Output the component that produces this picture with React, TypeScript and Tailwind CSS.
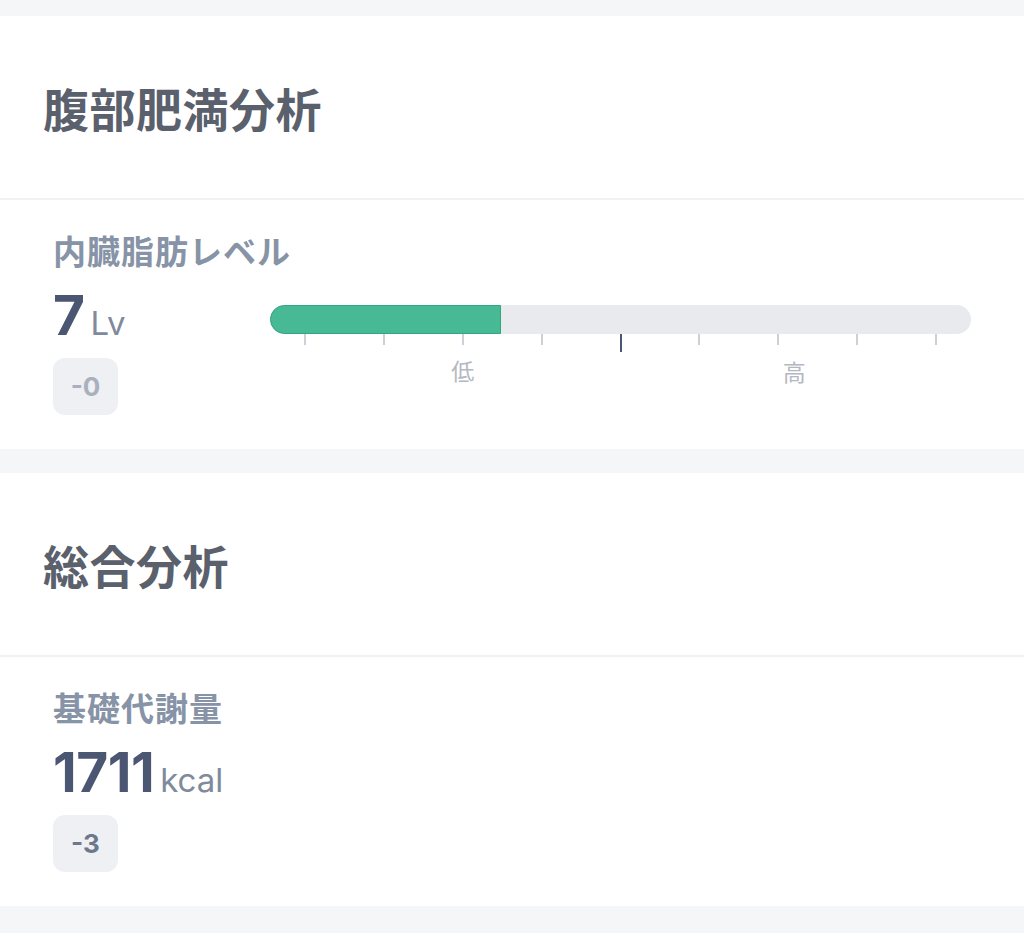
import React from "react";

const jp = "font-['Noto_Sans_CJK_JP',sans-serif]";
const num = "font-['Inter','Noto_Sans_CJK_JP',sans-serif]";

// 目盛りの位置（%）
const ticks = [5, 16.25, 27.5, 38.75, 50, 61.25, 72.5, 83.75, 95];

function SectionHeader({ title }: { title: string }) {
  return (
    <div className="h-[184px] flex items-center px-[43px] border-b-2 border-[#eff1f4]">
      <h2 className={`${jp} text-[46px] font-semibold text-[#5a606c] tracking-[0.5px]`}>
        {title}
      </h2>
    </div>
  );
}

function Badge({ text, muted }: { text: string; muted?: boolean }) {
  return (
    <div
      className={`${num} mt-[13px] h-[57px] w-[65px] rounded-[12px] bg-[#eef0f4] flex items-center justify-center text-[26px] font-bold ${
        muted ? "text-[#aab1bd]" : "text-[#6d788b]"
      }`}
    >
      {text}
    </div>
  );
}

function Value({ value, unit }: { value: string; unit: string }) {
  return (
    <div className="h-[60px] flex items-baseline gap-[6px]">
      <span className={`${num} text-[55px] font-bold text-[#4a5672] leading-[60px] tracking-[-0.5px]`}>
        {value}
      </span>
      <span className={`${num} text-[33px] text-[#7f8a9c] leading-[60px]`}>{unit}</span>
    </div>
  );
}

function LevelBar({ percent }: { percent: number }) {
  return (
    <div className="flex-1 mt-[20px]">
      <div className="relative h-[29px] rounded-full bg-[#e8eaee]">
        <div
          className="absolute left-0 top-0 h-full rounded-l-full bg-[#47b994] border border-[#33a67f]"
          style={{ width: `${percent}%` }}
        />
      </div>
      <div className="relative h-[50px]">
        {ticks.map((t, i) => (
          <div
            key={i}
            className={`absolute top-0 w-[2px] -ml-[1px] ${
              i === 4 ? "h-[18px] bg-[#4a5672]" : "h-[11px] bg-[#cdd1d7]"
            }`}
            style={{ left: `${t}%` }}
          />
        ))}
        <span
          className={`${jp} absolute top-[22px] -translate-x-1/2 text-[23px] leading-[28px] text-[#b3b8c1]`}
          style={{ left: "27.5%" }}
        >
          低
        </span>
        <span
          className={`${jp} absolute top-[23px] -translate-x-1/2 text-[23px] leading-[28px] text-[#b3b8c1]`}
          style={{ left: "74.8%" }}
        >
          高
        </span>
      </div>
    </div>
  );
}

function Metric({
  label,
  value,
  unit,
  diff,
  muted,
  bar,
}: {
  label: string;
  value: string;
  unit: string;
  diff: string;
  muted?: boolean;
  bar?: number;
}) {
  return (
    <div className="px-[53px] pt-[30px] pb-[34px]">
      <div className={`${jp} h-[40px] leading-[40px] text-[33px] font-semibold text-[#8793a6] tracking-[1px]`}>
        {label}
      </div>
      <div className="mt-[15px] flex">
        <div className="w-[217px] shrink-0">
          <Value value={value} unit={unit} />
          <Badge text={diff} muted={muted} />
        </div>
        {bar !== undefined && <LevelBar percent={bar} />}
      </div>
    </div>
  );
}

export default function App() {
  return (
    <div className="w-[1024px] min-h-[933px] bg-[#f5f6f8]">
      <div className="h-4" />
      <section className="bg-white">
        <SectionHeader title="腹部肥満分析" />
        <Metric label="内臓脂肪レベル" value="7" unit="Lv" diff="-0" muted bar={33} />
      </section>
      <div className="h-6" />
      <section className="bg-white">
        <SectionHeader title="総合分析" />
        <Metric label="基礎代謝量" value="1711" unit="kcal" diff="-3" />
      </section>
      <div className="h-[27px]" />
    </div>
  );
}
